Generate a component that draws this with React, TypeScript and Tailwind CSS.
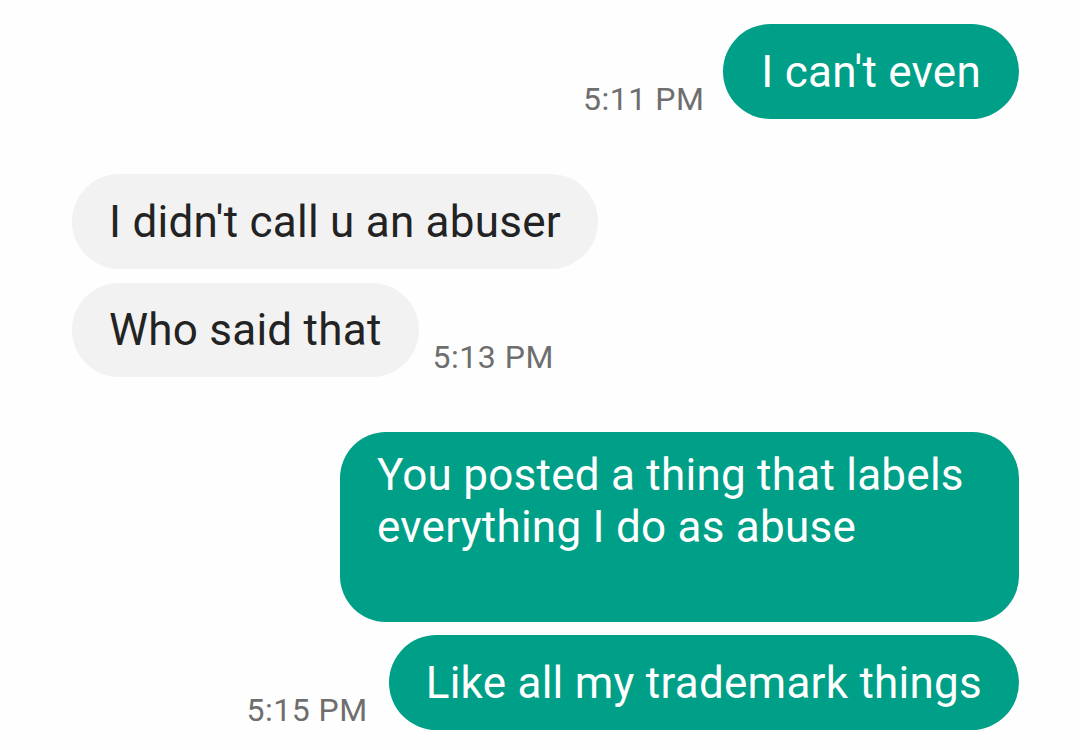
import React from 'react';

const font = { fontFamily: 'Roboto, "Noto Sans", sans-serif' };

const Time: React.FC<{ t: string }> = ({ t }) => (
  <span className="text-[32px] leading-none tracking-[0.5px] text-[#6e6e6e] mb-[4px] whitespace-nowrap">{t}</span>
);

const App: React.FC = () => {
  return (
    <div className="w-[1080px] h-[750px] overflow-hidden bg-[#fefefe]" style={font}>
      <div className="flex flex-col pt-[24px] pl-[72px] pr-[61px]">
        <div className="flex justify-end items-end gap-[19px]">
          <Time t="5:11 PM" />
          <div className="h-[95px] flex items-center px-[38px] rounded-full bg-[#009f87] text-white text-[44px] tracking-[0.25px]">
            I can't even
          </div>
        </div>

        <div className="flex mt-[55px]">
          <div className="h-[95px] flex items-center px-[37px] rounded-full bg-[#f2f2f2] text-[#232323] text-[44px] tracking-[0.25px]">
            I didn't call u an abuser
          </div>
        </div>

        <div className="flex items-end gap-[14px] mt-[14px]">
          <div className="h-[94px] flex items-center px-[37px] rounded-full bg-[#f2f2f2] text-[#232323] text-[44px] tracking-[0.25px]">
            Who said that
          </div>
          <Time t="5:13 PM" />
        </div>

        <div className="flex justify-end mt-[55px]">
          <div className="w-[679px] h-[190px] rounded-[46px] bg-[#009f87] text-white text-[44px] tracking-[0.25px] leading-[52px] pl-[37px] pr-[20px] pt-[17px]">
            You posted a thing that labels everything I do as abuse
          </div>
        </div>

        <div className="flex justify-end items-end gap-[21px] mt-[13px]">
          <Time t="5:15 PM" />
          <div className="h-[95px] flex items-center px-[37px] rounded-full bg-[#009f87] text-white text-[44px] tracking-[0.25px]">
            Like all my trademark things
          </div>
        </div>
      </div>
    </div>
  );
};

export default App;
